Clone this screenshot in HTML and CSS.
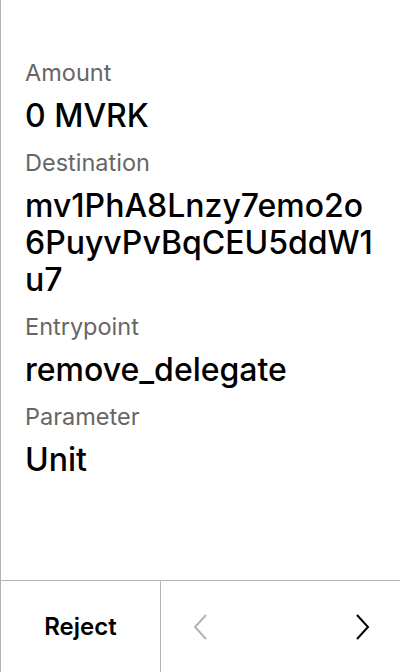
FILE: index.html
```html
<!DOCTYPE html>
<html>
<head>
<meta charset="utf-8">
<link rel="stylesheet" href="styles.css">
</head>
<body>
<div class="screen">
  <div class="content">
    <div class="field">
      <div class="label">Amount</div>
      <div class="value">0 MVRK</div>
    </div>
    <div class="field">
      <div class="label">Destination</div>
      <div class="value">mv1PhA8Lnzy7emo2o6PuyvPvBqCEU5ddW1u7</div>
    </div>
    <div class="field">
      <div class="label">Entrypoint</div>
      <div class="value">remove_delegate</div>
    </div>
    <div class="field">
      <div class="label">Parameter</div>
      <div class="value">Unit</div>
    </div>
  </div>
  <div class="footer">
    <div class="reject">Reject</div>
    <div class="nav">
      <svg class="chev" width="16" height="26" viewBox="0 0 16 26"><path d="M13 1 L2 13 L13 25" fill="none" stroke="#b3b3b3" stroke-width="2"/></svg>
      <svg class="chev" width="16" height="26" viewBox="0 0 16 26"><path d="M3 1 L14 13 L3 25" fill="none" stroke="#000" stroke-width="2"/></svg>
    </div>
  </div>
</div>
</body>
</html>
```

FILE: styles.css
```css
html, body {
  margin: 0;
  padding: 0;
  background: #fff;
}
.screen {
  width: 399px;
  height: 672px;
  border-left: 1px solid #b3b3b3;
  display: flex;
  flex-direction: column;
  font-family: Inter, "Noto Sans", sans-serif;
  color: #000;
}
.content {
  flex: 1;
  padding: 58px 24px 0 24px;
  display: flex;
  flex-direction: column;
  gap: 14px;
}
.field {
  display: flex;
  flex-direction: column;
  gap: 9px;
}
.label {
  font-size: 23.5px;
  line-height: 30px;
  color: #666;
}
.value {
  font-size: 32px;
  font-weight: 500;
  line-height: 37px;
  word-break: break-all;
}
.footer {
  height: 91px;
  border-top: 1px solid #b3b3b3;
  display: flex;
}
.reject {
  width: 159px;
  border-right: 1px solid #b3b3b3;
  display: flex;
  align-items: center;
  justify-content: center;
  font-size: 24px;
  font-weight: 600;
}
.nav {
  flex: 1;
  display: flex;
  align-items: center;
  justify-content: space-between;
  padding: 0 30px 0 32px;
}
```
